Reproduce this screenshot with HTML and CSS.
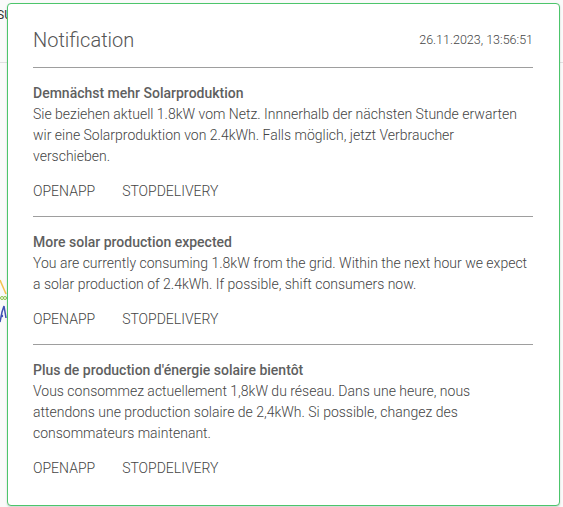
FILE: index.html
```html
<!DOCTYPE html>
<html>
<head>
<meta charset="utf-8">
<link rel="stylesheet" href="styles.css">
</head>
<body>
<div class="backdrop">
  <div class="bg-label">SUM</div>
  <div class="bg-line"></div>
  <svg class="bg-chart" width="563" height="507" viewBox="0 0 563 507">
    <polyline points="0,280 3,287 6,294" fill="none" stroke="#f2c14e" stroke-width="1.5"/>
    <circle cx="2" cy="298" r="1.5" fill="none" stroke="#8bc34a" stroke-width="1"/>
    <circle cx="5" cy="298" r="1.5" fill="none" stroke="#8bc34a" stroke-width="1"/>
    <polyline points="0,322 2,312 4,306 6,318" fill="none" stroke="#3f51b5" stroke-width="1.5"/>
    <circle cx="2" cy="316" r="1.2" fill="#3f51b5"/>
    <polyline points="549,304 550,295 552,285" fill="none" stroke="#3f51b5" stroke-width="1.5"/>
    <circle cx="550" cy="323" r="2" fill="#f2c14e"/>
  </svg>
</div>
<div class="modal">
  <div class="modal-header">
    <h1 class="modal-title">Notification</h1>
    <span class="modal-date">26.11.2023, 13:56:51</span>
  </div>
  <div class="note">
    <h2 class="note-title">Demnächst mehr Solarproduktion</h2>
    <p class="note-text">Sie beziehen aktuell 1.8kW vom Netz. Innnerhalb der nächsten Stunde erwarten wir eine Solarproduktion von 2.4kWh. Falls möglich, jetzt Verbraucher verschieben.</p>
    <div class="note-actions">
      <button class="action">OPENAPP</button>
      <button class="action">STOPDELIVERY</button>
    </div>
  </div>
  <div class="note">
    <h2 class="note-title">More solar production expected</h2>
    <p class="note-text">You are currently consuming 1.8kW from the grid. Within the next hour we expect a solar production of 2.4kWh. If possible, shift consumers now.</p>
    <div class="note-actions">
      <button class="action">OPENAPP</button>
      <button class="action">STOPDELIVERY</button>
    </div>
  </div>
  <div class="note last">
    <h2 class="note-title">Plus de production d'énergie solaire bientôt</h2>
    <p class="note-text">Vous consommez actuellement 1,8kW du réseau. Dans une heure, nous attendons une production solaire de 2,4kWh. Si possible, changez des consommateurs maintenant.</p>
    <div class="note-actions">
      <button class="action">OPENAPP</button>
      <button class="action">STOPDELIVERY</button>
    </div>
  </div>
</div>
</body>
</html>
```

FILE: styles.css
```css
html, body {
  margin: 0;
  padding: 0;
  width: 563px;
  height: 507px;
  overflow: hidden;
  background: #ffffff;
  font-family: Roboto, "Liberation Sans", sans-serif;
}

.backdrop {
  position: absolute;
  inset: 0;
  background: #fafafa;
}

.bg-label {
  position: absolute;
  left: -3px;
  top: 8px;
  font-size: 12px;
  color: #333;
}

.bg-line {
  position: absolute;
  left: 0;
  right: 0;
  top: 62px;
  height: 1px;
  background: #e0e0e0;
}

.bg-chart {
  position: absolute;
  left: 0;
  top: 0;
}

.modal {
  position: absolute;
  left: 7px;
  top: 3px;
  width: 553px;
  height: 503px;
  box-sizing: border-box;
  border: 1px solid #4cc56b;
  border-radius: 4px;
  background: #ffffff;
  box-shadow: 0 1px 2px rgba(0, 0, 0, 0.18);
  padding: 0 26px 0 25px;
  color: #5f5f5f;
}

.modal-header {
  display: flex;
  justify-content: space-between;
  align-items: center;
  height: 63px;
  border-bottom: 1px solid #9e9e9e;
}

.modal-title {
  margin: 0;
  font-size: 20px;
  font-weight: 300;
  color: #555555;
  padding-top: 8px;
}

.modal-date {
  font-size: 12.5px;
  font-weight: 300;
  color: #444444;
  padding-top: 8px;
}

.note {
  padding-top: 15px;
  border-bottom: 1px solid #9e9e9e;
  padding-bottom: 7px;
}

.note.last {
  border-bottom: none;
}

.note-title {
  margin: 0;
  font-size: 14px;
  font-weight: 500;
  line-height: 21px;
  color: #5f5f5f;
}

.note-text {
  margin: 0;
  font-size: 14px;
  font-weight: 300;
  line-height: 21px;
  color: #444444;
}

.note-actions {
  display: flex;
  gap: 27px;
  margin-top: 6px;
  height: 36px;
  align-items: center;
}

.action {
  border: none;
  background: none;
  padding: 0;
  font-family: Roboto, "Liberation Sans", sans-serif;
  font-size: 14px;
  font-weight: 300;
  color: #444444;
  letter-spacing: 0;
}
```
